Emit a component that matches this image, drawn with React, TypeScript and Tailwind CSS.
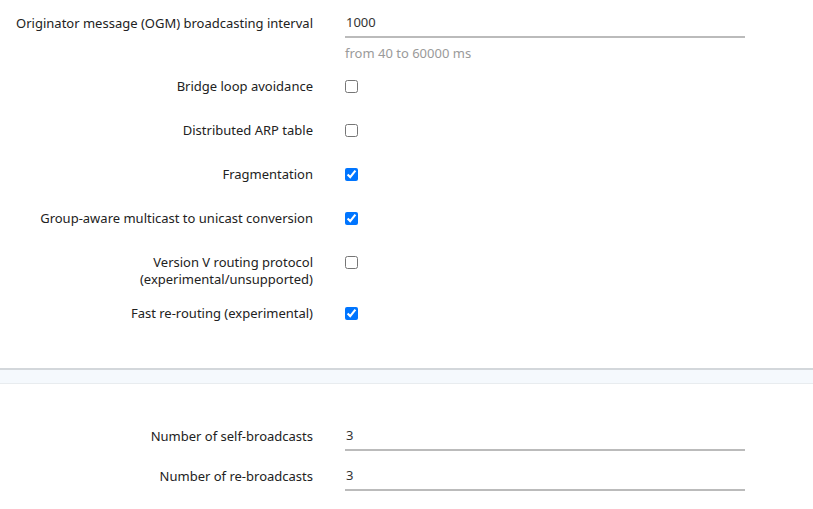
import React from "react"

const font = { fontFamily: '"Noto Sans", "Liberation Sans", sans-serif' }

function Label({ children }: { children: React.ReactNode }) {
  return <div className="w-[313px] shrink-0 text-right text-[13px] leading-[17px] text-[#222]">{children}</div>
}

function TextRow({ label, value }: { label: string; value: string }) {
  return (
    <div className="flex items-center">
      <Label>{label}</Label>
      <div className="ml-[32px] w-[400px]">
        <input
          defaultValue={value}
          className="block h-[30px] w-full border-b-2 border-[#bbbbbb] bg-transparent pl-px text-[13px] text-[#333] outline-none"
        />
      </div>
    </div>
  )
}

function CheckRow({ label, checked, tall }: { label: React.ReactNode; checked?: boolean; tall?: boolean }) {
  return (
    <div className={`flex items-start pt-[13px] ${tall ? "pb-[4px]" : "pb-[14px]"}`}>
      <Label>{label}</Label>
      <div className="ml-[32px] flex h-[17px] items-center">
        <input
          type="checkbox"
          defaultChecked={checked}
          className="m-0 h-[13px] w-[13px] accent-[#0075ff]"
        />
      </div>
    </div>
  )
}

export default function App() {
  return (
    <div className="min-h-[509px] bg-white" style={font}>
      <section className="pt-[8px] pb-[32px]">
        <TextRow label="Originator message (OGM) broadcasting interval" value="1000" />
        <div className="ml-[345px] mt-[7px] mb-[3px] text-[13px] leading-[17px] text-[#9a9a9a]">from 40 to 60000 ms</div>
        <CheckRow label="Bridge loop avoidance" />
        <CheckRow label="Distributed ARP table" />
        <CheckRow label="Fragmentation" checked />
        <CheckRow label="Group-aware multicast to unicast conversion" checked />
        <CheckRow
          tall
          label={
            <>
              Version V routing protocol
              <br />
              (experimental/unsupported)
            </>
          }
        />
        <CheckRow label="Fast re-routing (experimental)" checked />
      </section>

      <div className="h-[16px] border-t-2 border-b border-t-[#d3d7db] border-b-[#e8ecef] bg-[#f5f9fd]" />

      <section className="flex flex-col gap-[10px] pt-[37px] pb-[18px]">
        <TextRow label="Number of self-broadcasts" value="3" />
        <TextRow label="Number of re-broadcasts" value="3" />
      </section>
    </div>
  )
}
